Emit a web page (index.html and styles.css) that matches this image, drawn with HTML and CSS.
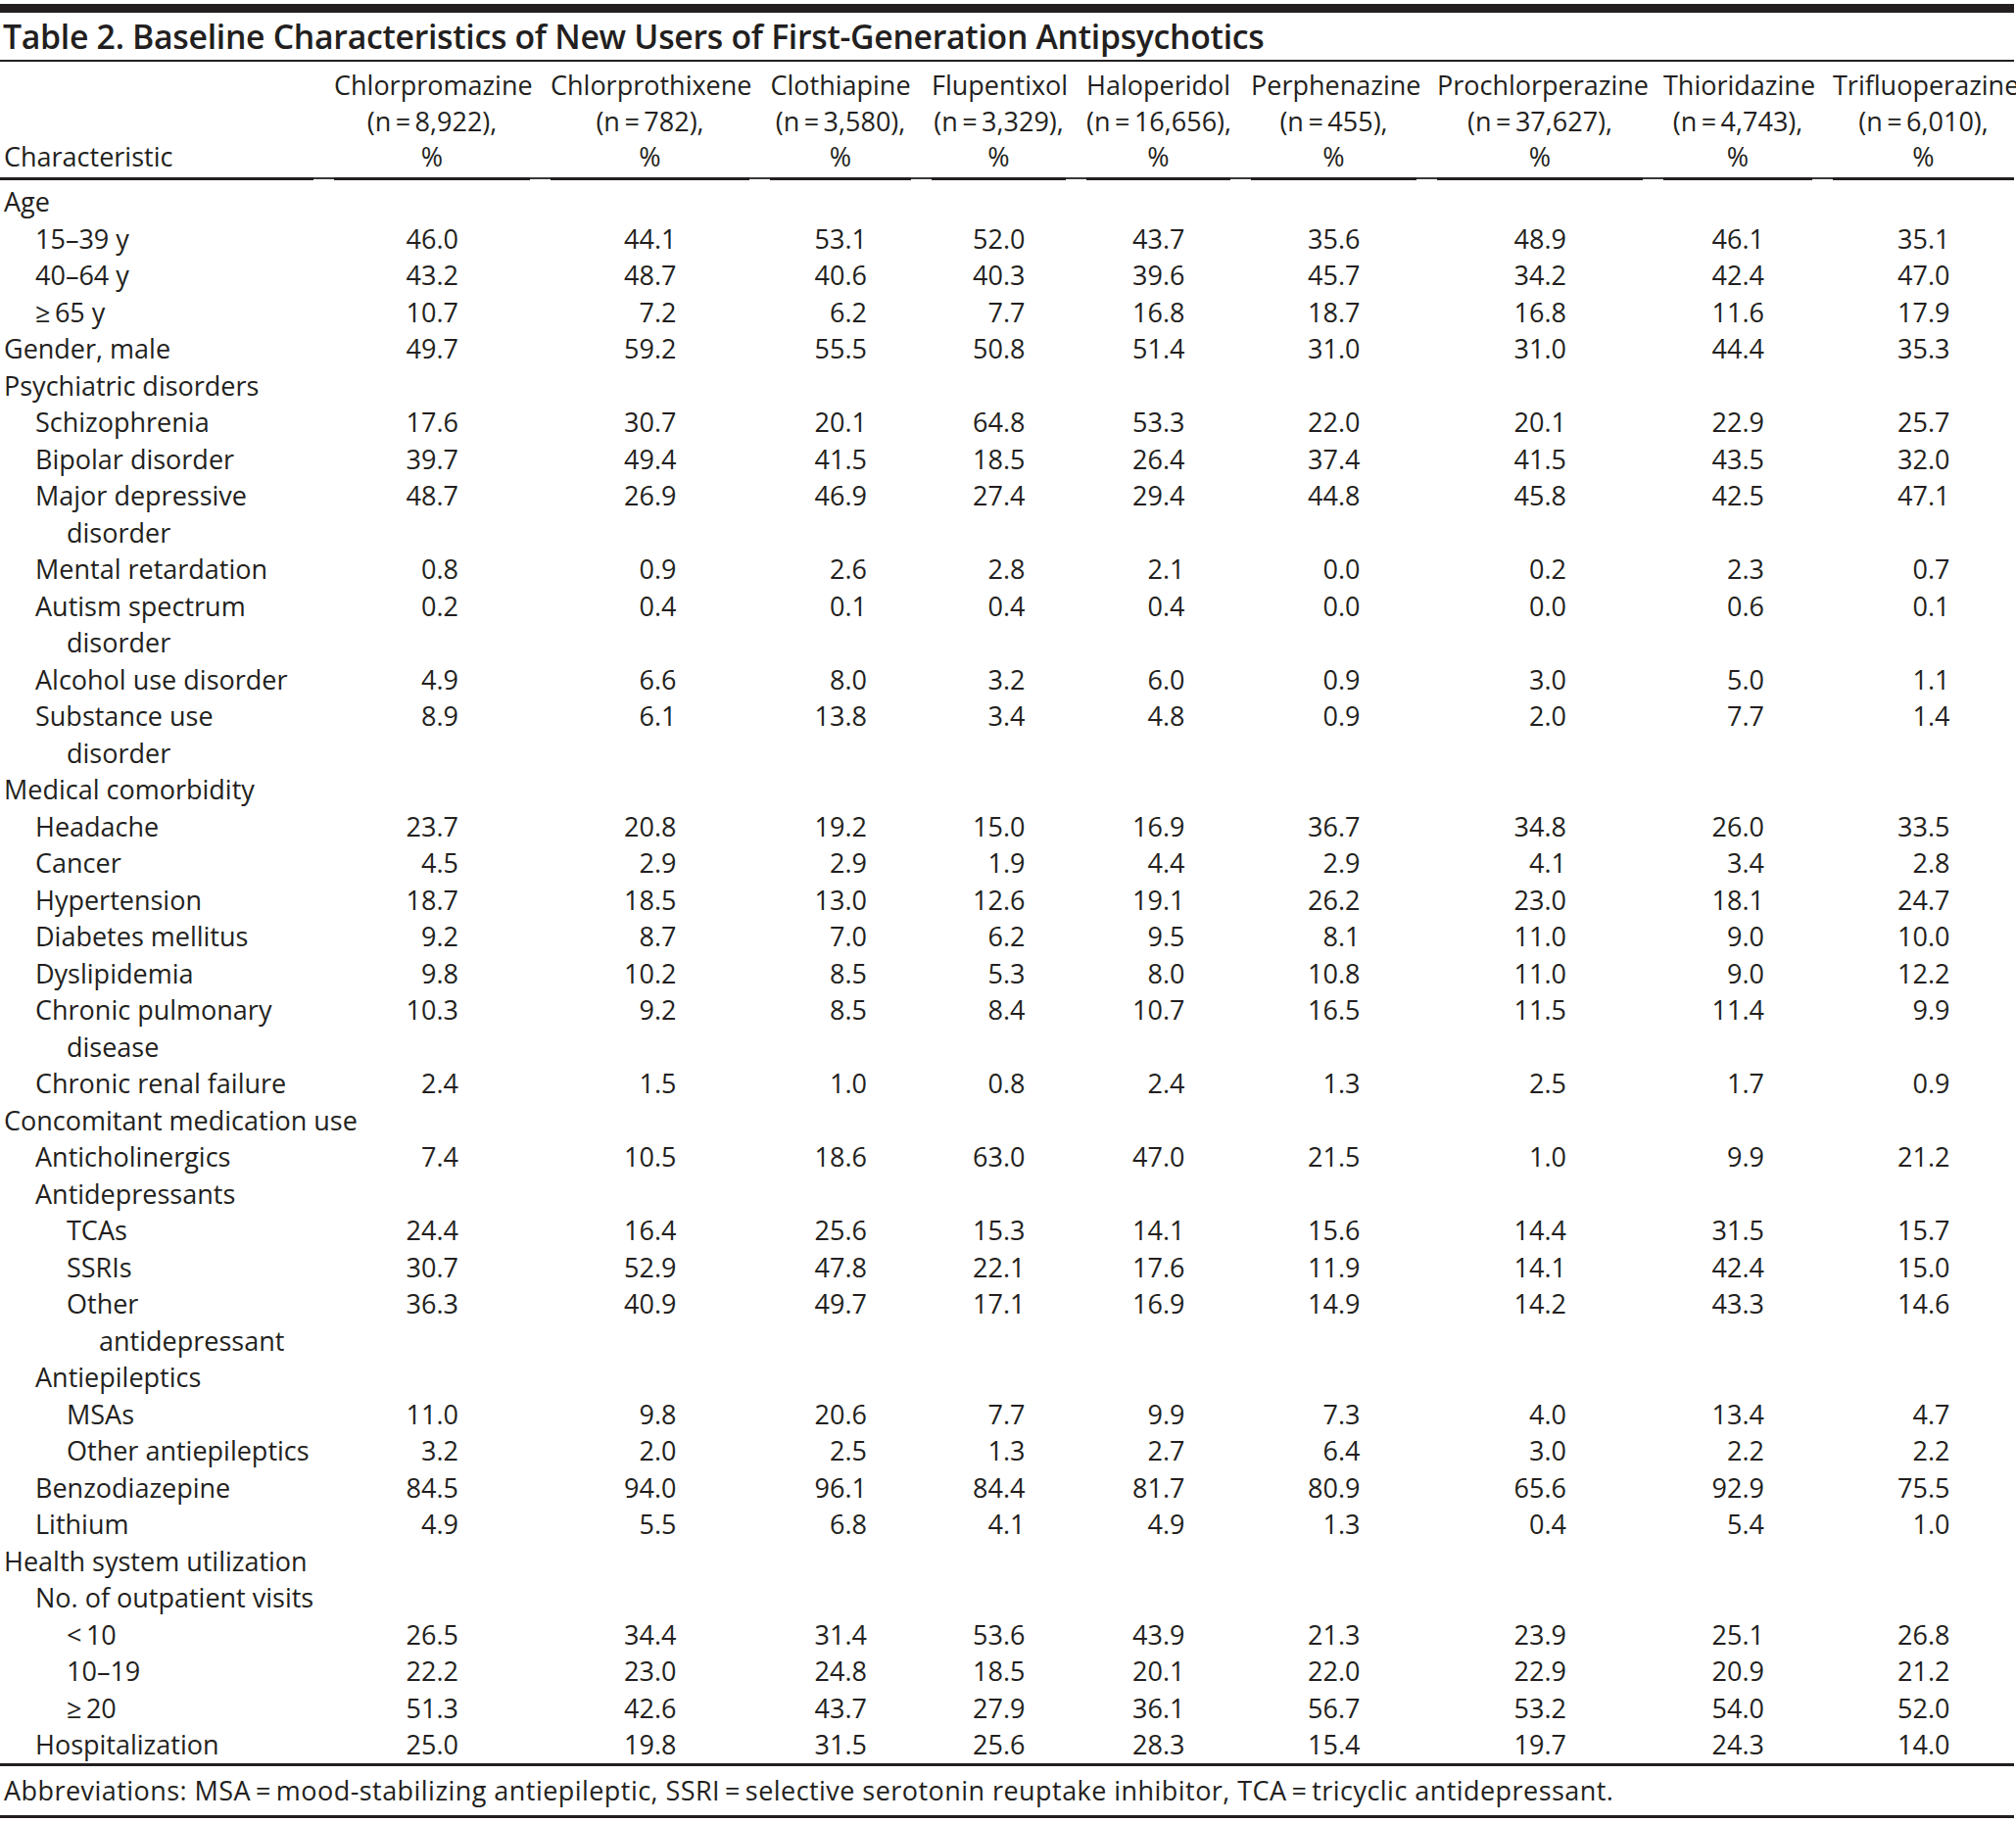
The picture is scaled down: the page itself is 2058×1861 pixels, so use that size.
FILE: index.html
```html
<!DOCTYPE html>
<html lang="en">
<head>
<meta charset="utf-8">
<title>Table 2. Baseline Characteristics of New Users of First-Generation Antipsychotics</title>
<link rel="stylesheet" href="styles.css">
</head>
<body>
<div class="page">
  <h1 class="title">Table 2. Baseline Characteristics of New Users of First-Generation Antipsychotics</h1>
  <table class="tbl">
    <colgroup>
      <col class="c-stub"><col class="c1"><col class="c2"><col class="c3"><col class="c4"><col class="c5"><col class="c6"><col class="c7"><col class="c8"><col class="c9">
    </colgroup>
    <thead>
      <tr>
        <th class="stub-h">Characteristic</th>
        <th>Chlorpromazine<br>(n&#8201;=&#8201;8,922),<br>%</th>
        <th>Chlorprothixene<br>(n&#8201;=&#8201;782),<br>%</th>
        <th>Clothiapine<br>(n&#8201;=&#8201;3,580),<br>%</th>
        <th>Flupentixol<br>(n&#8201;=&#8201;3,329),<br>%</th>
        <th>Haloperidol<br>(n&#8201;=&#8201;16,656),<br>%</th>
        <th>Perphenazine<br>(n&#8201;=&#8201;455),<br>%</th>
        <th>Prochlorperazine<br>(n&#8201;=&#8201;37,627),<br>%</th>
        <th>Thioridazine<br>(n&#8201;=&#8201;4,743),<br>%</th>
        <th>Trifluoperazine<br>(n&#8201;=&#8201;6,010),<br>%</th>
      </tr>
    </thead>
    <tbody>
      <tr class="first"><th class="l0 sec" colspan="10">Age</th></tr>
      <tr><th class="l1">15–39 y</th><td><span>46.0</span></td><td><span>44.1</span></td><td><span>53.1</span></td><td><span>52.0</span></td><td><span>43.7</span></td><td><span>35.6</span></td><td><span>48.9</span></td><td><span>46.1</span></td><td><span>35.1</span></td></tr>
      <tr><th class="l1">40–64 y</th><td><span>43.2</span></td><td><span>48.7</span></td><td><span>40.6</span></td><td><span>40.3</span></td><td><span>39.6</span></td><td><span>45.7</span></td><td><span>34.2</span></td><td><span>42.4</span></td><td><span>47.0</span></td></tr>
      <tr><th class="l1">≥&#8201;65 y</th><td><span>10.7</span></td><td><span>7.2</span></td><td><span>6.2</span></td><td><span>7.7</span></td><td><span>16.8</span></td><td><span>18.7</span></td><td><span>16.8</span></td><td><span>11.6</span></td><td><span>17.9</span></td></tr>
      <tr><th class="l0">Gender, male</th><td><span>49.7</span></td><td><span>59.2</span></td><td><span>55.5</span></td><td><span>50.8</span></td><td><span>51.4</span></td><td><span>31.0</span></td><td><span>31.0</span></td><td><span>44.4</span></td><td><span>35.3</span></td></tr>
      <tr><th class="l0 sec" colspan="10">Psychiatric disorders</th></tr>
      <tr><th class="l1">Schizophrenia</th><td><span>17.6</span></td><td><span>30.7</span></td><td><span>20.1</span></td><td><span>64.8</span></td><td><span>53.3</span></td><td><span>22.0</span></td><td><span>20.1</span></td><td><span>22.9</span></td><td><span>25.7</span></td></tr>
      <tr><th class="l1">Bipolar disorder</th><td><span>39.7</span></td><td><span>49.4</span></td><td><span>41.5</span></td><td><span>18.5</span></td><td><span>26.4</span></td><td><span>37.4</span></td><td><span>41.5</span></td><td><span>43.5</span></td><td><span>32.0</span></td></tr>
      <tr><th class="l1">Major depressive<br>disorder</th><td><span>48.7</span></td><td><span>26.9</span></td><td><span>46.9</span></td><td><span>27.4</span></td><td><span>29.4</span></td><td><span>44.8</span></td><td><span>45.8</span></td><td><span>42.5</span></td><td><span>47.1</span></td></tr>
      <tr><th class="l1">Mental retardation</th><td><span>0.8</span></td><td><span>0.9</span></td><td><span>2.6</span></td><td><span>2.8</span></td><td><span>2.1</span></td><td><span>0.0</span></td><td><span>0.2</span></td><td><span>2.3</span></td><td><span>0.7</span></td></tr>
      <tr><th class="l1">Autism spectrum<br>disorder</th><td><span>0.2</span></td><td><span>0.4</span></td><td><span>0.1</span></td><td><span>0.4</span></td><td><span>0.4</span></td><td><span>0.0</span></td><td><span>0.0</span></td><td><span>0.6</span></td><td><span>0.1</span></td></tr>
      <tr><th class="l1">Alcohol use disorder</th><td><span>4.9</span></td><td><span>6.6</span></td><td><span>8.0</span></td><td><span>3.2</span></td><td><span>6.0</span></td><td><span>0.9</span></td><td><span>3.0</span></td><td><span>5.0</span></td><td><span>1.1</span></td></tr>
      <tr><th class="l1">Substance use<br>disorder</th><td><span>8.9</span></td><td><span>6.1</span></td><td><span>13.8</span></td><td><span>3.4</span></td><td><span>4.8</span></td><td><span>0.9</span></td><td><span>2.0</span></td><td><span>7.7</span></td><td><span>1.4</span></td></tr>
      <tr><th class="l0 sec" colspan="10">Medical comorbidity</th></tr>
      <tr><th class="l1">Headache</th><td><span>23.7</span></td><td><span>20.8</span></td><td><span>19.2</span></td><td><span>15.0</span></td><td><span>16.9</span></td><td><span>36.7</span></td><td><span>34.8</span></td><td><span>26.0</span></td><td><span>33.5</span></td></tr>
      <tr><th class="l1">Cancer</th><td><span>4.5</span></td><td><span>2.9</span></td><td><span>2.9</span></td><td><span>1.9</span></td><td><span>4.4</span></td><td><span>2.9</span></td><td><span>4.1</span></td><td><span>3.4</span></td><td><span>2.8</span></td></tr>
      <tr><th class="l1">Hypertension</th><td><span>18.7</span></td><td><span>18.5</span></td><td><span>13.0</span></td><td><span>12.6</span></td><td><span>19.1</span></td><td><span>26.2</span></td><td><span>23.0</span></td><td><span>18.1</span></td><td><span>24.7</span></td></tr>
      <tr><th class="l1">Diabetes mellitus</th><td><span>9.2</span></td><td><span>8.7</span></td><td><span>7.0</span></td><td><span>6.2</span></td><td><span>9.5</span></td><td><span>8.1</span></td><td><span>11.0</span></td><td><span>9.0</span></td><td><span>10.0</span></td></tr>
      <tr><th class="l1">Dyslipidemia</th><td><span>9.8</span></td><td><span>10.2</span></td><td><span>8.5</span></td><td><span>5.3</span></td><td><span>8.0</span></td><td><span>10.8</span></td><td><span>11.0</span></td><td><span>9.0</span></td><td><span>12.2</span></td></tr>
      <tr><th class="l1">Chronic pulmonary<br>disease</th><td><span>10.3</span></td><td><span>9.2</span></td><td><span>8.5</span></td><td><span>8.4</span></td><td><span>10.7</span></td><td><span>16.5</span></td><td><span>11.5</span></td><td><span>11.4</span></td><td><span>9.9</span></td></tr>
      <tr><th class="l1">Chronic renal failure</th><td><span>2.4</span></td><td><span>1.5</span></td><td><span>1.0</span></td><td><span>0.8</span></td><td><span>2.4</span></td><td><span>1.3</span></td><td><span>2.5</span></td><td><span>1.7</span></td><td><span>0.9</span></td></tr>
      <tr><th class="l0 sec" colspan="10">Concomitant medication use</th></tr>
      <tr><th class="l1">Anticholinergics</th><td><span>7.4</span></td><td><span>10.5</span></td><td><span>18.6</span></td><td><span>63.0</span></td><td><span>47.0</span></td><td><span>21.5</span></td><td><span>1.0</span></td><td><span>9.9</span></td><td><span>21.2</span></td></tr>
      <tr><th class="l1 sec" colspan="10">Antidepressants</th></tr>
      <tr><th class="l2">TCAs</th><td><span>24.4</span></td><td><span>16.4</span></td><td><span>25.6</span></td><td><span>15.3</span></td><td><span>14.1</span></td><td><span>15.6</span></td><td><span>14.4</span></td><td><span>31.5</span></td><td><span>15.7</span></td></tr>
      <tr><th class="l2">SSRIs</th><td><span>30.7</span></td><td><span>52.9</span></td><td><span>47.8</span></td><td><span>22.1</span></td><td><span>17.6</span></td><td><span>11.9</span></td><td><span>14.1</span></td><td><span>42.4</span></td><td><span>15.0</span></td></tr>
      <tr><th class="l2">Other<br>antidepressant</th><td><span>36.3</span></td><td><span>40.9</span></td><td><span>49.7</span></td><td><span>17.1</span></td><td><span>16.9</span></td><td><span>14.9</span></td><td><span>14.2</span></td><td><span>43.3</span></td><td><span>14.6</span></td></tr>
      <tr><th class="l1 sec" colspan="10">Antiepileptics</th></tr>
      <tr><th class="l2">MSAs</th><td><span>11.0</span></td><td><span>9.8</span></td><td><span>20.6</span></td><td><span>7.7</span></td><td><span>9.9</span></td><td><span>7.3</span></td><td><span>4.0</span></td><td><span>13.4</span></td><td><span>4.7</span></td></tr>
      <tr><th class="l2">Other antiepileptics</th><td><span>3.2</span></td><td><span>2.0</span></td><td><span>2.5</span></td><td><span>1.3</span></td><td><span>2.7</span></td><td><span>6.4</span></td><td><span>3.0</span></td><td><span>2.2</span></td><td><span>2.2</span></td></tr>
      <tr><th class="l1">Benzodiazepine</th><td><span>84.5</span></td><td><span>94.0</span></td><td><span>96.1</span></td><td><span>84.4</span></td><td><span>81.7</span></td><td><span>80.9</span></td><td><span>65.6</span></td><td><span>92.9</span></td><td><span>75.5</span></td></tr>
      <tr><th class="l1">Lithium</th><td><span>4.9</span></td><td><span>5.5</span></td><td><span>6.8</span></td><td><span>4.1</span></td><td><span>4.9</span></td><td><span>1.3</span></td><td><span>0.4</span></td><td><span>5.4</span></td><td><span>1.0</span></td></tr>
      <tr><th class="l0 sec" colspan="10">Health system utilization</th></tr>
      <tr><th class="l1 sec" colspan="10">No. of outpatient visits</th></tr>
      <tr><th class="l2">&lt;&#8201;10</th><td><span>26.5</span></td><td><span>34.4</span></td><td><span>31.4</span></td><td><span>53.6</span></td><td><span>43.9</span></td><td><span>21.3</span></td><td><span>23.9</span></td><td><span>25.1</span></td><td><span>26.8</span></td></tr>
      <tr><th class="l2">10–19</th><td><span>22.2</span></td><td><span>23.0</span></td><td><span>24.8</span></td><td><span>18.5</span></td><td><span>20.1</span></td><td><span>22.0</span></td><td><span>22.9</span></td><td><span>20.9</span></td><td><span>21.2</span></td></tr>
      <tr><th class="l2">≥&#8201;20</th><td><span>51.3</span></td><td><span>42.6</span></td><td><span>43.7</span></td><td><span>27.9</span></td><td><span>36.1</span></td><td><span>56.7</span></td><td><span>53.2</span></td><td><span>54.0</span></td><td><span>52.0</span></td></tr>
      <tr><th class="l1">Hospitalization</th><td><span>25.0</span></td><td><span>19.8</span></td><td><span>31.5</span></td><td><span>25.6</span></td><td><span>28.3</span></td><td><span>15.4</span></td><td><span>19.7</span></td><td><span>24.3</span></td><td><span>14.0</span></td></tr>
    </tbody>
  </table>
  <p class="note">Abbreviations: MSA&#8201;=&#8201;mood-stabilizing antiepileptic, SSRI&#8201;=&#8201;selective serotonin reuptake inhibitor, TCA&#8201;=&#8201;tricyclic antidepressant.</p>
</div>
</body>
</html>
```

FILE: styles.css
```css
html, body {
  margin: 0;
  padding: 0;
  background: #ffffff;
}

body {
  font-family: "Open Sans", "Noto Sans", "Liberation Sans", sans-serif;
  color: #231f20;
}

.page {
  width: 2056px;
  padding-top: 4px;
}

.title {
  margin: 0;
  border-top: 9px solid #231f20;
  border-bottom: 2px solid #231f20;
  height: 48px;
  line-height: 48px;
  padding-left: 3px;
  font-size: 33.8px;
  font-weight: 600;
  white-space: nowrap;
  letter-spacing: -0.3px;
}

.tbl {
  width: 2056px;
  table-layout: fixed;
  border-collapse: separate;
  border-spacing: 0;
  font-size: 27px;
  margin-top: 6px;
}

.c-stub { width: 320px; }
.c1 { width: 221px; }
.c2 { width: 224px; }
.c3 { width: 165px; }
.c4 { width: 158px; }
.c5 { width: 168px; }
.c6 { width: 190px; }
.c7 { width: 231px; }
.c8 { width: 173px; }
.c9 { width: 206px; }

.tbl th,
.tbl td {
  padding: 0;
  font-weight: 400;
  white-space: nowrap;
}

.tbl thead th {
  vertical-align: bottom;
  text-align: center;
  line-height: 36.7px;
  padding: 0 0 5px 21px;
  background:
    linear-gradient(#231f20, #231f20) right bottom / calc(100% - 21px) 3px no-repeat,
    linear-gradient(#3a3637, #3a3637) left calc(100% - 1px) / 100% 2px no-repeat;
}

.tbl thead th.stub-h {
  text-align: left;
  padding-left: 4px;
  background: linear-gradient(#231f20, #231f20) left bottom / 100% 3px no-repeat;
}

.tbl tbody th {
  text-align: left;
  vertical-align: top;
  line-height: 37.5px;
}

.tbl tbody td {
  vertical-align: top;
  text-align: center;
  line-height: 37.5px;
  padding-left: 21px;
}

.tbl tbody td span {
  display: inline-block;
  width: 54px;
  text-align: right;
}

.tbl tbody tr.first th,
.tbl tbody tr.first td {
  padding-top: 3px;
}

.tbl tbody tr:last-child th,
.tbl tbody tr:last-child td {
  border-bottom: 3px solid #231f20;
}

.l0 {
  padding-left: 4px !important;
}

.l1 {
  padding-left: 68px !important;
  text-indent: -32px;
}

.l2 {
  padding-left: 101px !important;
  text-indent: -33px;
}

.note {
  margin: 0;
  height: 50px;
  line-height: 50px;
  padding-left: 4px;
  font-size: 27px;
  letter-spacing: 0.45px;
  white-space: nowrap;
  border-bottom: 3px solid #231f20;
}
```
